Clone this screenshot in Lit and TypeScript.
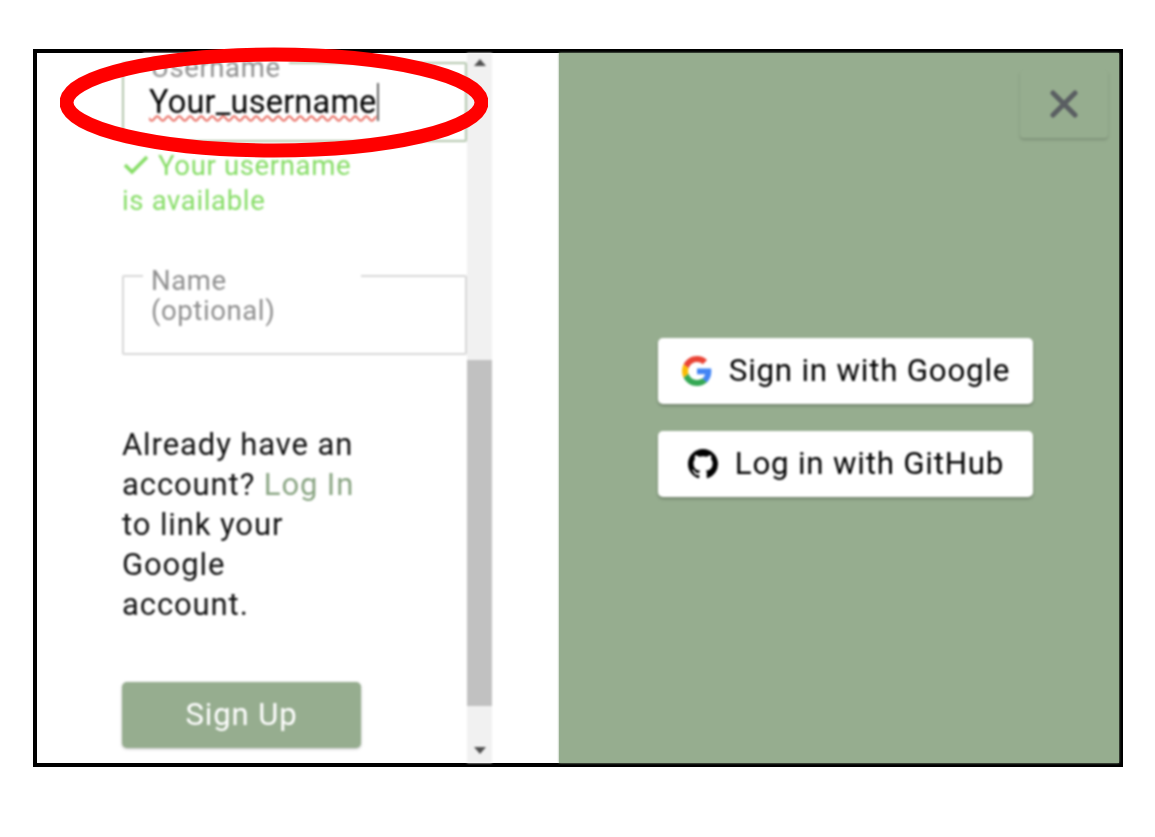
import { LitElement, html, css } from "lit";
import { customElement } from "lit/decorators.js";

@customElement("app-root")
export class AppRoot extends LitElement {
  static styles = css`
    :host { display: block; height: 837px; padding: 49px 0 0 33px; box-sizing: border-box; background: #fff; font-family: Roboto, "Liberation Sans", sans-serif; overflow: hidden; }
    .frame { position: relative; width: 1090px; height: 718px; box-sizing: border-box; border: 4px solid #000; display: flex; background: linear-gradient(to right, #fff 522px, #96ad8f 522px); }
    .soft { display: flex; width: 100%; height: 100%; filter: blur(0.8px); }
    .left { width: 522px; flex: none; display: flex; }
    .form { width: 430px; flex: none; box-sizing: border-box; padding: 9px 0 0 85px; }
    .field { position: relative; width: 345px; height: 80px; box-sizing: border-box; border: 2px solid #d8d8d8; border-radius: 2px; }
    .field.ok { border-color: #b4c7ae; }
    .label { position: absolute; left: 19px; top: -11px; background: #fff; box-sizing: border-box; padding: 0 8px; font-size: 27.5px; line-height: 30px; color: #8f8f8f; letter-spacing: 0.6px; }
    .label.user { width: 146px; }
    .label.name { width: 218px; }
    .value { position: absolute; left: 25px; top: 19px; font-size: 32.5px; line-height: 38px; color: #000; letter-spacing: .2px; border-right: 2px solid #666; text-decoration: underline wavy #e8655a 1.5px; text-underline-offset: 2px; }
    .help { display: flex; flex-wrap: wrap; width: 240px; padding-top: 6px; font-size: 27.5px; line-height: 35px; color: #86dd66; letter-spacing: .65px; }
    .help svg { width: 26px; height: 22px; margin: 6px 9px 0 1px; flex: none; }
    .name-field { margin-top: 57px; }
    .para { margin: 70px 0 0; font-size: 31px; line-height: 40px; color: #111; letter-spacing: .9px; }
    .para a { color: #8aa583; text-decoration: none; }
    .signup { display: flex; align-items: center; justify-content: center; width: 239px; height: 66px; margin-top: 57px; padding-bottom: 2px; border: 0; border-radius: 5px; background: #96ad8f; color: #fff; font: inherit; font-size: 31px; letter-spacing: .9px; box-shadow: 0 1px 3px rgba(0,0,0,.25); }
    .bar { width: 25px; flex: none; display: flex; flex-direction: column; background: #f1f1f1; }
    .arrow { height: 14px; display: flex; justify-content: center; align-items: center; }
    .arrow.top { margin-top: 2px; }
    .arrow svg { width: 12px; height: 7px; }
    .gap1 { height: 291px; }
    .thumb { height: 346px; background: #c1c1c1; }
    .gap2 { flex: 1; display: flex; align-items: flex-end; justify-content: center; padding-bottom: 9px; }
    .right { flex: 1; position: relative; background: #96ad8f; display: flex; flex-direction: column; align-items: center; justify-content: center; gap: 27px; padding: 18px 0 0 12px; box-sizing: border-box; }
    .btn { width: 375px; height: 66px; padding: 0 0 0 2px; background: #fff; border-radius: 5px; border: 0; display: flex; align-items: center; justify-content: center; gap: 17px; font: inherit; font-size: 31.3px; letter-spacing: .78px; color: #000; box-shadow: 0 2px 3px rgba(0,0,0,.25); }
    .btn svg { width: 30px; height: 30px; flex: none; }
    .close { position: absolute; top: 17px; right: 11px; width: 88px; height: 68px; background: #96ad8f; border: 0; border-radius: 4px; display: flex; align-items: center; justify-content: center; box-shadow: 0 2px 3px rgba(0,0,0,.16); }
    .close svg { width: 28px; height: 28px; }
    .ring { position: absolute; left: 23px; top: -6px; width: 428px; height: 111px; pointer-events: none; }
  `;

  render() {
    return html`<div class="frame">
      <div class="soft">
        <div class="left">
          <div class="form">
            <div class="field ok">
              <span class="label user">Username</span>
              <span class="value">Your_username</span>
            </div>
            <div class="help">
              <svg viewBox="0 0 26 22"><path d="M2 11l7 7L24 3" fill="none" stroke="#86dd66" stroke-width="3.5"/></svg>
              <span>Your username</span>
              <span>is available</span>
            </div>
            <div class="field name-field">
              <span class="label name">Name<br />(optional)</span>
            </div>
            <p class="para">Already have an<br />account? <a href="#">Log In</a><br />to link your<br />Google<br />account.</p>
            <button class="signup">Sign Up</button>
          </div>
          <div class="bar">
            <div class="arrow top"><svg viewBox="0 0 12 7"><path d="M6 0l6 7H0z" fill="#505050"/></svg></div>
            <div class="gap1"></div>
            <div class="thumb"></div>
            <div class="gap2"><svg width="12" height="7" viewBox="0 0 12 7"><path d="M0 0h12L6 7z" fill="#505050"/></svg></div>
          </div>
        </div>
        <div class="right">
          <button class="close" aria-label="Close"><svg viewBox="0 0 28 28"><path d="M3 3l22 22M25 3L3 25" stroke="#5a5e62" stroke-width="5" stroke-linecap="round"/></svg></button>
          <button class="btn">
            <svg viewBox="0 0 48 48"><path fill="#EA4335" d="M24 9.5c3.54 0 6.71 1.22 9.21 3.6l6.85-6.85C35.9 2.38 30.47 0 24 0 14.62 0 6.51 5.38 2.56 13.22l7.98 6.19C12.43 13.72 17.74 9.5 24 9.5z"/><path fill="#4285F4" d="M46.98 24.55c0-1.57-.15-3.09-.38-4.55H24v9.02h12.94c-.58 2.96-2.26 5.48-4.78 7.18l7.73 6c4.51-4.18 7.09-10.36 7.09-17.65z"/><path fill="#FBBC05" d="M10.53 28.59c-.48-1.45-.76-2.99-.76-4.59s.27-3.14.76-4.59l-7.98-6.19C.92 16.46 0 20.12 0 24c0 3.88.92 7.54 2.56 10.78l7.97-6.19z"/><path fill="#34A853" d="M24 48c6.48 0 11.93-2.13 15.89-5.81l-7.73-6c-2.15 1.45-4.92 2.3-8.16 2.3-6.26 0-11.57-4.22-13.47-9.91l-7.98 6.19C6.51 42.62 14.62 48 24 48z"/></svg>
            <span>Sign in with Google</span>
          </button>
          <button class="btn">
            <svg viewBox="0 0 16 16"><path fill="#000" d="M8 0C3.58 0 0 3.58 0 8c0 3.54 2.29 6.53 5.47 7.59.4.07.55-.17.55-.38 0-.19-.01-.82-.01-1.49-2.01.37-2.53-.49-2.69-.94-.09-.23-.48-.94-.82-1.13-.28-.15-.68-.52-.01-.53.63-.01 1.08.58 1.23.82.72 1.21 1.87.87 2.33.66.07-.52.28-.87.51-1.07-1.78-.2-3.64-.89-3.64-3.95 0-.87.31-1.59.82-2.15-.08-.2-.36-1.02.08-2.12 0 0 .67-.21 2.2.82.64-.18 1.32-.27 2-.27s1.36.09 2 .27c1.53-1.04 2.2-.82 2.2-.82.44 1.1.16 1.92.08 2.12.51.56.82 1.27.82 2.15 0 3.07-1.87 3.75-3.65 3.95.29.25.54.73.54 1.48 0 1.07-.01 1.93-.01 2.2 0 .21.15.46.55.38A8.01 8.01 0 0 0 16 8c0-4.42-3.58-8-8-8z"/></svg>
            <span>Log in with GitHub</span>
          </button>
        </div>
      </div>
      <svg class="ring" viewBox="0 0 428 111"><ellipse cx="214" cy="55.5" rx="207.5" ry="48" fill="none" stroke="#f00" stroke-width="14"/></svg>
    </div>`;
  }
}
